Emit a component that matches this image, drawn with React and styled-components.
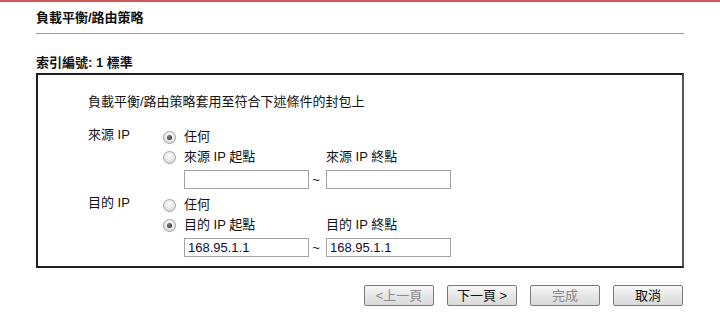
import React from "react";
import styled, { createGlobalStyle } from "styled-components";

const GlobalStyle = createGlobalStyle`
  html, body { margin: 0; padding: 0; background: #fff; }
  body {
    font-family: "Liberation Sans", "Noto Sans CJK TC", Arial, sans-serif;
    font-size: 13px;
    color: #111;
  }
  * { box-sizing: border-box; }
`;

const Page = styled.div`
  width: 720px;
  height: 324px;
  border-top: 2px solid #d25656;
  padding: 0 36px;
  overflow: hidden;
`;

const Title = styled.div`
  height: 32px;
  line-height: 16px;
  padding-top: 8px;
  font-weight: bold;
  border-bottom: 1px solid #9c9c9c;
`;

const SubTitle = styled.div`
  margin-top: 21px;
  line-height: 16px;
  font-weight: bold;
  margin-bottom: 2px;
`;

const Box = styled.div`
  border: 2px solid #1e1e1e;
  border-right-color: #555;
  padding: 19px 0 5px 50px;
  height: 195px;
`;

const Description = styled.div`
  line-height: 16px;
`;

const Section = styled.div`
  display: grid;
  grid-template-columns: 75px auto;
  margin-top: ${(p) => p.$gap}px;
`;

const Label = styled.div`
  line-height: 16px;
`;

const Options = styled.div`
  display: grid;
  grid-template-columns: 21px 125px 17px 125px;
  grid-auto-rows: 20px;
  align-items: center;
`;

const InputRow = styled.div`
  grid-column: 2 / 5;
  display: grid;
  grid-template-columns: 125px 17px 125px;
  align-items: center;
  margin-top: 4px;
  height: 19px;
`;

const Radio = styled.span`
  width: 13px;
  height: 13px;
  border-radius: 50%;
  border: 1px solid #a3a3a3;
  background: radial-gradient(circle at 50% 35%, #fbfbfb 0%, #e4e4e4 60%, #d2d2d2 100%);
  display: flex;
  align-items: center;
  justify-content: center;
  &::after {
    content: "";
    width: 5px;
    height: 5px;
    border-radius: 50%;
    background: radial-gradient(circle at 40% 35%, #888 0%, #3a3a3a 70%);
    display: ${(p) => (p.$checked ? "block" : "none")};
  }
`;

const OptText = styled.span`
  grid-column: ${(p) => p.$col || "2 / 5"};
  line-height: 16px;
`;

const TextInput = styled.input`
  width: 125px;
  height: 19px;
  border: 1px solid #a4a4a4;
  padding: 0 3px;
  font-family: "Liberation Sans", Arial, sans-serif;
  font-size: 13px;
  color: #101030;
  background: #fff;
  outline: none;
`;

const Tilde = styled.span`
  text-align: center;
  padding-right: 3px;
`;

const Buttons = styled.div`
  display: flex;
  justify-content: flex-end;
  gap: 13px;
  margin-top: 17px;
  padding-right: 1px;
`;

const Button = styled.button`
  width: 70px;
  height: 21px;
  border: 1px solid #7a7a7a;
  border-radius: 2px;
  background: linear-gradient(#f8f8f8, #e6e6e6 50%, #dadada);
  font-family: "Liberation Sans", "Noto Sans CJK TC", Arial, sans-serif;
  font-size: 13px;
  color: ${(p) => (p.disabled ? "#8c8c8c" : "#111")};
  padding: 0;
  line-height: 19px;
`;

function IpSection({ label, startLabel, endLabel, anyChecked, startVal, endVal, gap }) {
  return (
    <Section $gap={gap}>
      <Label>{label}</Label>
      <Options>
        <Radio $checked={anyChecked} />
        <OptText>任何</OptText>
        <Radio $checked={!anyChecked} />
        <OptText $col="2 / 4">{startLabel}</OptText>
        <OptText $col="4 / 5">{endLabel}</OptText>
        <InputRow>
          <TextInput defaultValue={startVal} />
          <Tilde>~</Tilde>
          <TextInput defaultValue={endVal} />
        </InputRow>
      </Options>
    </Section>
  );
}

export default function App() {
  return (
    <>
      <GlobalStyle />
      <Page>
        <Title>負載平衡/路由策略</Title>
        <SubTitle>索引編號: 1 標準</SubTitle>
        <Box>
          <Description>負載平衡/路由策略套用至符合下述條件的封包上</Description>
          <IpSection
            gap={17}
            label="來源 IP"
            startLabel="來源 IP 起點"
            endLabel="來源 IP 終點"
            anyChecked
            startVal=""
            endVal=""
          />
          <IpSection
            gap={8}
            label="目的 IP"
            startLabel="目的 IP 起點"
            endLabel="目的 IP 終點"
            anyChecked={false}
            startVal="168.95.1.1"
            endVal="168.95.1.1"
          />
        </Box>
        <Buttons>
          <Button disabled>&lt;上一頁</Button>
          <Button>下一頁 &gt;</Button>
          <Button disabled>完成</Button>
          <Button>取消</Button>
        </Buttons>
      </Page>
    </>
  );
}
